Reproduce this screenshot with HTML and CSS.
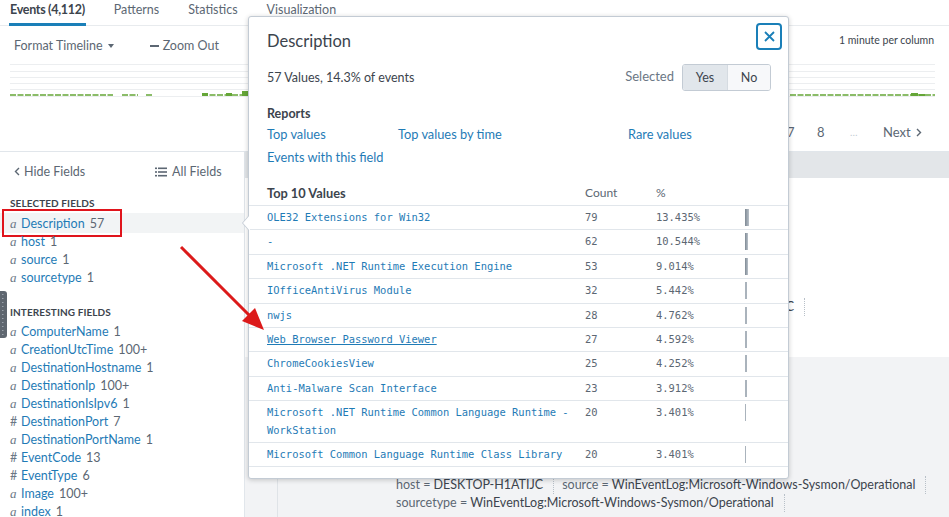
FILE: index.html
```html
<!DOCTYPE html>
<html lang="en">
<head>
<meta charset="utf-8">
<title>Search - Events</title>
<link rel="stylesheet" href="styles.css">
</head>
<body>
<div class="app">
  <nav class="tabs">
    <a class="tab is-active">Events (4,112)</a>
    <a class="tab">Patterns</a>
    <a class="tab">Statistics</a>
    <a class="tab">Visualization</a>
  </nav>

  <section class="timeline">
    <div class="tl-toolbar">
      <span class="tl-btn">Format Timeline<span class="tl-caret"></span></span>
      <span class="tl-btn tl-zoom"><span class="tl-minus"></span>Zoom Out</span>
      <span class="tl-scale">1 minute per column</span>
    </div>
    <svg class="tl-chart" width="925" height="40" viewBox="0 0 925 40">
      <g stroke="#eceef0" stroke-width="1">
        <line x1="0" y1="6.5" x2="925" y2="6.5"/>
        <line x1="0" y1="13.5" x2="925" y2="13.5"/>
        <line x1="0" y1="19.5" x2="925" y2="19.5"/>
        <line x1="0" y1="25.5" x2="925" y2="25.5"/>
        <line x1="0" y1="31.5" x2="925" y2="31.5"/>
        <line x1="0" y1="38.5" x2="925" y2="38.5"/>
      </g>
      <g stroke="#65a637" stroke-width="1.5" stroke-dasharray="6 1.5">
        <line x1="0" y1="37" x2="103" y2="37"/>
        <line x1="112" y1="37" x2="128" y2="37"/>
        <line x1="136" y1="37" x2="143" y2="37"/>
        <line x1="192" y1="37" x2="245" y2="37"/>
        <line x1="780" y1="37" x2="925" y2="37"/>
      </g>
      <g fill="#65a637">
        <rect x="192" y="35" width="6" height="3"/>
        <rect x="216" y="35" width="6" height="3"/>
        <rect x="232" y="33" width="6" height="5"/>
        <rect x="901" y="35" width="7" height="3"/>
        <rect x="909" y="36" width="6" height="2"/>
      </g>
    </svg>
    <div class="pager">
      <span class="pg pg-7">7</span>
      <span class="pg pg-8">8</span>
      <span class="pg pg-ellipsis">…</span>
      <span class="pg pg-next">Next
        <svg class="chev" width="6" height="9" viewBox="0 0 6 9"><path d="M1 1l3.5 3.5L1 8" fill="none" stroke="#5c6773" stroke-width="1.4"/></svg>
      </span>
    </div>
  </section>

  <div class="workspace">
    <aside class="fields">
      <div class="fields-head">
        <span class="hide-fields"><svg width="6" height="9" viewBox="0 0 6 9"><path d="M5 1L1.5 4.5 5 8" fill="none" stroke="#5c6773" stroke-width="1.4"/></svg>Hide Fields</span>
        <span class="all-fields"><svg width="12" height="10" viewBox="0 0 12 10"><g fill="#5c6773"><rect x="0" y="0.5" width="2" height="1.6"/><rect x="3" y="0.5" width="9" height="1.6"/><rect x="0" y="4.2" width="2" height="1.6"/><rect x="3" y="4.2" width="9" height="1.6"/><rect x="0" y="7.9" width="2" height="1.6"/><rect x="3" y="7.9" width="9" height="1.6"/></g></svg>All Fields</span>
      </div>
      <h3 class="fields-title">Selected Fields</h3>
      <ul class="field-list">
        <li class="field is-current"><i class="ftype">a</i><span class="fname">Description</span><span class="fcount">57</span></li>
        <li class="field"><i class="ftype">a</i><span class="fname">host</span><span class="fcount">1</span></li>
        <li class="field"><i class="ftype">a</i><span class="fname">source</span><span class="fcount">1</span></li>
        <li class="field"><i class="ftype">a</i><span class="fname">sourcetype</span><span class="fcount">1</span></li>
      </ul>
      <h3 class="fields-title fields-title-2">Interesting Fields</h3>
      <ul class="field-list">
        <li class="field"><i class="ftype">a</i><span class="fname">ComputerName</span><span class="fcount">1</span></li>
        <li class="field"><i class="ftype">a</i><span class="fname">CreationUtcTime</span><span class="fcount">100+</span></li>
        <li class="field"><i class="ftype">a</i><span class="fname">DestinationHostname</span><span class="fcount">1</span></li>
        <li class="field"><i class="ftype">a</i><span class="fname">DestinationIp</span><span class="fcount">100+</span></li>
        <li class="field"><i class="ftype">a</i><span class="fname">DestinationIsIpv6</span><span class="fcount">1</span></li>
        <li class="field"><i class="ftype num">#</i><span class="fname">DestinationPort</span><span class="fcount">7</span></li>
        <li class="field"><i class="ftype">a</i><span class="fname">DestinationPortName</span><span class="fcount">1</span></li>
        <li class="field"><i class="ftype num">#</i><span class="fname">EventCode</span><span class="fcount">13</span></li>
        <li class="field"><i class="ftype num">#</i><span class="fname">EventType</span><span class="fcount">6</span></li>
        <li class="field"><i class="ftype">a</i><span class="fname">Image</span><span class="fcount">100+</span></li>
        <li class="field"><i class="ftype">a</i><span class="fname">index</span><span class="fcount">1</span></li>
      </ul>
    </aside>

    <main class="events">
      <div class="events-head"></div>
      <div class="event event-first">
        <div class="gutter"></div>
        <div class="event-body">
          <div class="kv-line kv-first">
            <span class="kv"><span class="k">host =</span> <span class="v">DESKTOP-H1ATIJC</span></span><span class="sep"></span>
          </div>
        </div>
      </div>
      <div class="event event-alt">
        <div class="gutter"></div>
        <div class="event-body event-body-alt">
          <div class="kv-line">
            <span class="kv"><span class="k">host =</span> <span class="v">DESKTOP-H1ATIJC</span></span><span class="sep"></span><span class="kv"><span class="k">source =</span> <span class="v">WinEventLog:Microsoft-Windows-Sysmon/Operational</span></span><span class="sep"></span>
          </div>
          <div class="kv-line">
            <span class="kv"><span class="k">sourcetype =</span> <span class="v">WinEventLog:Microsoft-Windows-Sysmon/Operational</span></span><span class="sep"></span>
          </div>
        </div>
      </div>
    </main>
  </div>

  <div class="popover">
    <div class="pop-head">
      <h2 class="pop-title">Description</h2>
      <button class="pop-close"><svg width="11" height="11" viewBox="0 0 11 11"><path d="M1 1l9 9M10 1l-9 9" stroke="#1a7fb8" stroke-width="1.8" fill="none"/></svg></button>
    </div>
    <div class="pop-summary">
      <span class="pop-count">57 Values, 14.3% of events</span>
      <span class="pop-selected">Selected</span>
      <div class="seg">
        <span class="seg-btn seg-yes">Yes</span>
        <span class="seg-btn seg-no">No</span>
      </div>
    </div>
    <div class="pop-reports">
      <h4 class="reports-title">Reports</h4>
      <div class="report-links">
        <a>Top values</a>
        <a>Top values by time</a>
        <a>Rare values</a>
        <a>Events with this field</a>
      </div>
    </div>
    <table class="values">
      <colgroup><col class="c1"><col class="c2"><col class="c3"><col class="c4"></colgroup>
      <thead>
        <tr><th>Top 10 Values</th><th class="h-light">Count</th><th class="h-light">%</th><th></th></tr>
      </thead>
      <tbody>
        <tr><td><a>OLE32 Extensions for Win32</a></td><td>79</td><td>13.435%</td><td><span class="bar strong" style="width:3.5px"></span></td></tr>
        <tr><td><a>-</a></td><td>62</td><td>10.544%</td><td><span class="bar strong" style="width:3px"></span></td></tr>
        <tr><td><a>Microsoft .NET Runtime Execution Engine</a></td><td>53</td><td>9.014%</td><td><span class="bar strong" style="width:3px"></span></td></tr>
        <tr><td><a>IOfficeAntiVirus Module</a></td><td>32</td><td>5.442%</td><td><span class="bar" style="width:1.5px"></span></td></tr>
        <tr><td><a>nwjs</a></td><td>28</td><td>4.762%</td><td><span class="bar" style="width:1.5px"></span></td></tr>
        <tr><td><a class="hover">Web Browser Password Viewer</a></td><td>27</td><td>4.592%</td><td><span class="bar" style="width:1.5px"></span></td></tr>
        <tr><td><a>ChromeCookiesView</a></td><td>25</td><td>4.252%</td><td><span class="bar" style="width:1.5px"></span></td></tr>
        <tr><td><a>Anti-Malware Scan Interface</a></td><td>23</td><td>3.912%</td><td><span class="bar" style="width:1.5px"></span></td></tr>
        <tr><td><a>Microsoft .NET Runtime Common Language Runtime - WorkStation</a></td><td>20</td><td>3.401%</td><td><span class="bar" style="width:1px"></span></td></tr>
        <tr><td><a>Microsoft Common Language Runtime Class Library</a></td><td>20</td><td>3.401%</td><td><span class="bar" style="width:1px"></span></td></tr>
      </tbody>
    </table>
  </div>

  <svg class="annot-arrow" width="949" height="517" viewBox="0 0 949 517">
    <line x1="181" y1="247" x2="251" y2="317" stroke="#dc1a1a" stroke-width="3"/>
    <polygon points="264,330 242,321 255,308" fill="#dc1a1a"/>
  </svg>
  <div class="drawer-handle"></div>
</div>
</body>
</html>
```
FILE: styles.css
```css
* { box-sizing: border-box; margin: 0; padding: 0; }
html, body { width: 949px; height: 517px; overflow: hidden; background: #fff; }
body {
  font-family: Lato, "Open Sans", "Liberation Sans", sans-serif;
  font-size: 12px;
  line-height: 18px;
  color: #3c444d;
}
a { color: #1f7bb6; text-decoration: none; }
ul { list-style: none; }
button { font: inherit; background: #fff; cursor: pointer; }

.app { position: relative; width: 949px; height: 517px; }

/* Tabs */
.tabs {
  display: flex;
  gap: 27px;
  height: 26px;
  padding-left: 9px;
  border-bottom: 1px solid #e8ebee;
}
.tab {
  position: relative;
  display: block;
  height: 25px;
  padding: 1px 1px 0;
  font-size: 12.5px;
  line-height: 18px;
  color: #5c6773;
}
.tab.is-active { color: #3c444d; font-weight: 700; letter-spacing: -0.3px; }
.tab.is-active::after {
  content: "";
  position: absolute;
  left: 0; right: 0; bottom: -1px;
  height: 3px;
  background: #1a7fb8;
}

/* Timeline */
.timeline { height: 125px; display: flex; flex-direction: column; }
.tl-toolbar {
  display: flex;
  align-items: flex-start;
  height: 32px;
  padding: 11px 15px 0 14px;
  font-size: 12.5px;
  color: #5c6773;
}
.tl-btn { display: inline-flex; align-items: center; line-height: 18px; }
.tl-caret {
  width: 0; height: 0;
  margin-left: 5px;
  border-left: 3.5px solid transparent;
  border-right: 3.5px solid transparent;
  border-top: 4px solid #5c6773;
}
.tl-zoom { margin-left: 36px; }
.tl-minus { width: 9px; height: 1.5px; background: #5c6773; margin-right: 4px; }
.tl-scale { margin-left: auto; margin-top: -6px; font-size: 10.5px; color: #3c444d; }
.tl-chart { display: block; margin-left: 10px; flex: none; }

.pager {
  display: flex;
  align-items: center;
  height: 24px;
  margin-top: 22px;
  padding-left: 787px;
  font-size: 13px;
  color: #5c6773;
}
.pg-7 { width: 30px; }
.pg-8 { width: 33px; }
.pg-ellipsis { width: 33px; color: #c3cbd4; font-size: 10px; }
.pg-next { display: inline-flex; align-items: center; gap: 5px; }

/* Workspace */
.workspace {
  display: flex;
  height: 366px;
  border-top: 1px solid #e1e6eb;
}

.fields { width: 245px; flex: none; border-right: 1px solid #e1e6eb; }
.fields-head {
  display: grid;
  grid-template-columns: 141px auto;
  align-items: center;
  height: 38px;
  padding: 1px 0 0 14px;
  font-size: 12.5px;
  color: #5c6773;
}
.hide-fields, .all-fields { display: inline-flex; align-items: center; }
.hide-fields svg { margin-right: 4px; }
.all-fields svg { margin-right: 5px; }

.fields-title {
  margin: 6px 0 4px;
  padding-left: 10px;
  font-size: 10px;
  line-height: 14px;
  font-weight: 700;
  text-transform: uppercase;
  letter-spacing: 0.1px;
  color: #3c444d;
}
.fields-title-2 { margin-top: 19px; margin-bottom: 3px; }

.field {
  position: relative;
  display: flex;
  align-items: center;
  height: 18px;
  padding: 1px 0 0 10px;
  font-size: 12.5px;
}
.field.is-current { background: #f2f4f5; box-shadow: 0 -1px 0 #f2f4f5, 0 1px 0 #f2f4f5; }
.field.is-current::after {
  content: "";
  position: absolute;
  left: 2px; top: -5px;
  width: 116px; height: 24px;
  border: 2.5px solid #e0141c;
}
.ftype {
  width: 11px;
  font-family: "Liberation Serif", "DejaVu Serif", serif;
  font-size: 13px;
  font-style: italic;
  color: #6b7785;
}
.ftype.num { font-family: Lato, sans-serif; font-style: normal; font-size: 12.5px; }
.fname { color: #1f7bb6; }
.fcount { margin-left: 5px; color: #5c6773; }

/* Events */
.events { flex: 1; display: flex; flex-direction: column; min-width: 0; }
.events-head { flex: none; height: 26px; background: #e3e6e9; }
.event { display: flex; }
.event-first { flex: none; height: 179px; background: #fff; }
.event-alt { flex: 1; background: #f2f3f5; }
.gutter { flex: none; width: 33px; border-right: 1px solid #dfe3e7; }
.event-first .gutter { border-right-color: #eef0f2; }
.event-body { padding-top: 120px; padding-left: 118px; }
.event-body-alt { padding-top: 119px; }
.kv-first { padding-left: 251px; }
.kv-line { display: flex; align-items: center; height: 18px; font-size: 12.5px; white-space: nowrap; }
.k { color: #5c6773; }
.v { color: #3c444d; }
.sep {
  display: inline-block;
  width: 0; height: 18px;
  margin: 0 8px 0 10px;
  border-left: 1px dotted #b8c0c8;
}

/* Popover */
.popover {
  position: absolute;
  left: 248px; top: 16px;
  width: 541px; height: 463px;
  background: #fff;
  border: 1px solid #c3cbd4;
  border-radius: 3px;
  box-shadow: 0 1px 5px rgba(0, 0, 0, 0.2);
}
.popover::before, .popover::after {
  content: "";
  position: absolute;
  top: 198px;
  width: 0; height: 0;
  border-top: 8px solid transparent;
  border-bottom: 8px solid transparent;
}
.popover::before { left: -7px; border-right: 7px solid #c3cbd4; }
.popover::after { left: -6px; border-right: 7px solid #fff; }

.pop-head { position: relative; padding: 15px 18px 0; }
.pop-title { font-size: 16.5px; line-height: 18px; font-weight: 400; color: #3c444d; }
.pop-close {
  position: absolute;
  top: 6px; right: 6px;
  width: 26px; height: 27px;
  display: flex; align-items: center; justify-content: center;
  border: 2px solid #1a7fb8;
  border-radius: 4px;
}

.pop-summary {
  display: flex;
  align-items: center;
  height: 27px;
  margin-top: 14px;
  padding: 0 17px 0 18px;
  font-size: 12.5px;
}
.pop-count { color: #3c444d; }
.pop-selected { margin-left: auto; margin-right: 8px; color: #6b7785; margin-top: -4px; font-size: 13px; }
.seg {
  display: flex;
  height: 27px;
  border: 1px solid #c3cbd4;
  border-radius: 3px;
  overflow: hidden;
}
.seg-btn { text-align: center; line-height: 25px; font-size: 12.5px; color: #3c444d; }
.seg-yes { width: 44px; background: #e1e6eb; }
.seg-no { width: 43px; background: #f7f8fa; border-left: 1px solid #d5dbe1; }

.pop-reports { margin-top: 15px; padding: 0 18px; }
.reports-title { font-size: 12.5px; line-height: 16px; font-weight: 700; color: #3c444d; }
.report-links {
  display: grid;
  grid-template-columns: 131px 230px auto;
  row-gap: 5px;
  margin-top: 3px;
  font-size: 12.8px;
}

.values {
  width: 539px;
  margin-top: 15px;
  border-collapse: collapse;
  table-layout: fixed;
}
.values col.c1 { width: 336px; }
.values col.c2 { width: 71px; }
.values col.c3 { width: 89px; }
.values col.c4 { width: 43px; }
.values th {
  height: 24px;
  padding: 3px 0;
  text-align: left;
  font-size: 12.8px;
  line-height: 18px;
  font-weight: 700;
  color: #3c444d;
  border-bottom: 1px solid #e1e6eb;
}
.values th.h-light { font-weight: 400; color: #5c6773; font-size: 12px; }
.values th:first-child, .values td:first-child { padding-left: 18px; padding-right: 10px; }
.values td {
  padding: 3px 0;
  vertical-align: top;
  font-family: "DejaVu Sans Mono", "Liberation Mono", monospace;
  font-size: 10.45px;
  line-height: 17.4px;
  color: #5c6773;
  border-bottom: 1px solid #e1e6eb;
}
.values td a { color: #1f7bb6; }
.values td a.hover { text-decoration: underline; }
.bar {
  display: block;
  height: 17px;
  background: #aab3bc;
}
.bar.strong { background: linear-gradient(90deg, #7e8994, #b9c1c9); }

/* Annotations / overlays */
.annot-arrow { position: absolute; left: 0; top: 0; pointer-events: none; }
.drawer-handle {
  position: absolute;
  left: 0; top: 291px;
  width: 7px; height: 47px;
  border-radius: 0 3px 3px 0;
  background:
    repeating-linear-gradient(180deg, #9aa2ab 0 1px, transparent 1px 4px) 2px 3px / 1.5px 41px no-repeat,
    #5e666f;
}
```
